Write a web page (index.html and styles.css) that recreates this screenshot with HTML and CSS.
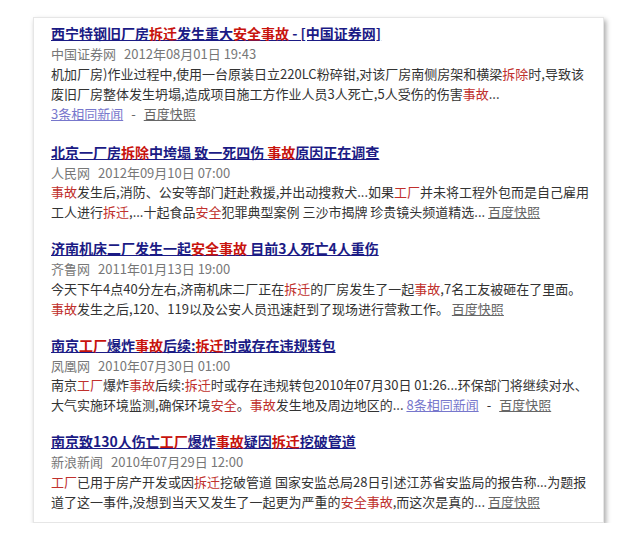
FILE: index.html
```html
<!DOCTYPE html>
<html lang="zh-CN">
<head>
  <meta charset="UTF-8" />
  <title>拆迁 安全事故 - 新闻搜索</title>
  <link rel="stylesheet" href="styles.css">
</head>
<body>

  <div class="results">

    <div class="result">
      <a href="#" class="title">西宁特钢旧厂房<em>拆迁</em>发生重大<em>安全事故</em> - [中国证券网]</a>
      <div class="meta">中国证券网<span class="date">2012年08月01日 19:43</span></div>
      <div class="summary">机加厂房)作业过程中,使用一台原装日立220LC粉碎钳,对该厂房南侧房架和横梁<em>拆除</em>时,导致该废旧厂房整体发生坍塌,造成项目施工方作业人员3人死亡,5人受伤的伤害<em>事故</em>...</div>
      <div class="links"><a href="#" class="same">3条相同新闻</a><span class="sep">-</span><a href="#" class="cache">百度快照</a></div>
    </div>

    <div class="result">
      <a href="#" class="title">北京一厂房<em>拆除</em>中垮塌 致一死四伤 <em>事故</em>原因正在调查</a>
      <div class="meta">人民网<span class="date">2012年09月10日 07:00</span></div>
      <div class="summary"><em>事故</em>发生后,消防、公安等部门赶赴救援,并出动搜救犬...如果<em>工厂</em>并未将工程外包而是自己雇用工人进行<em>拆迁</em>,...十起食品<em>安全</em>犯罪典型案例 三沙市揭牌 珍贵镜头频道精选... <a href="#" class="cache">百度快照</a></div>
    </div>

    <div class="result">
      <a href="#" class="title">济南机床二厂发生一起<em>安全事故</em> 目前3人死亡4人重伤</a>
      <div class="meta">齐鲁网<span class="date">2011年01月13日 19:00</span></div>
      <div class="summary">今天下午4点40分左右,济南机床二厂正在<em>拆迁</em>的厂房发生了一起<em>事故</em>,7名工友被砸在了里面。<br><em>事故</em>发生之后,120、119以及公安人员迅速赶到了现场进行营救工作。 <a href="#" class="cache">百度快照</a></div>
    </div>

    <div class="result">
      <a href="#" class="title">南京<em>工厂</em>爆炸<em>事故</em>后续:<em>拆迁</em>时或存在违规转包</a>
      <div class="meta">凤凰网<span class="date">2010年07月30日 01:00</span></div>
      <div class="summary">南京<em>工厂</em>爆炸<em>事故</em>后续:<em>拆迁</em>时或存在违规转包2010年07月30日 01:26...环保部门将继续对水、大气实施环境监测,确保环境<em>安全</em>。<em>事故</em>发生地及周边地区的... <a href="#" class="same">8条相同新闻</a><span class="sep">-</span><a href="#" class="cache">百度快照</a></div>
    </div>

    <div class="result">
      <a href="#" class="title">南京致130人伤亡<em>工厂</em>爆炸<em>事故</em>疑因<em>拆迁</em>挖破管道</a>
      <div class="meta">新浪新闻<span class="date">2010年07月29日 12:00</span></div>
      <div class="summary"><em>工厂</em>已用于房产开发或因<em>拆迁</em>挖破管道 国家安监总局28日引述江苏省安监局的报告称...为题报道了这一事件,没想到当天又发生了一起更为严重的<em>安全事故</em>,而这次是真的... <a href="#" class="cache">百度快照</a></div>
    </div>

  </div>

</body>
</html>
```

FILE: styles.css
```css
body {
  margin: 0;
  background-color: #fff;
  font-family: "Noto Sans CJK SC", "Liberation Sans", sans-serif;
  color: #333;
}

.results {
  width: 540px;
  margin: 17px 0 0 33px;
  padding: 5px 12px 10px 17px;
  background-color: #fff;
  border: 1px solid #e6e6e6;
  box-shadow: 2px 3px 5px rgba(0,0,0,0.35);
}

.result {
  margin-bottom: 16px;
}

.result:first-child {
  margin-bottom: 18px;
}

.result:last-child {
  margin-bottom: 0;
}

em {
  font-style: normal;
  color: #c0302c;
}

.title {
  display: block;
  font-size: 14px;
  line-height: 21px;
  font-weight: bold;
  color: #1b1b85;
  text-decoration: underline;
}

.title em {
  color: #c8130d;
}

.meta {
  font-size: 13px;
  line-height: 19.5px;
  color: #777;
}

.date {
  margin-left: 8px;
}

.summary {
  font-size: 13px;
  line-height: 20px;
  color: #333;
}

.links {
  font-size: 13px;
  line-height: 20px;
  color: #666;
}

.sep {
  margin: 0 8px;
}

.same {
  color: #7777cc;
}

.cache {
  color: #666;
}
```
